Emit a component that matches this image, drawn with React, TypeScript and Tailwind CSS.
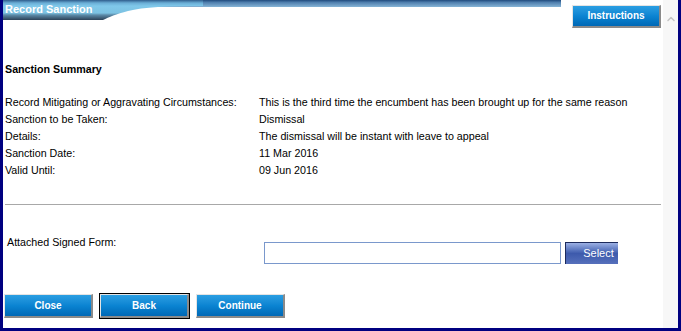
import { ChevronUp } from "lucide-react";

const rows = [
  { label: "Record Mitigating or Aggravating Circumstances:", value: "This is the third time the encumbent has been brought up for the same reason" },
  { label: "Sanction to be Taken:", value: "Dismissal" },
  { label: "Details:", value: "The dismissal will be instant with leave to appeal" },
  { label: "Sanction Date:", value: "11 Mar 2016" },
  { label: "Valid Until:", value: "09 Jun 2016" },
];

// bevelled blue button, like the old web forms
function BlueButton({ text, focused }: { text: string; focused?: boolean }) {
  const btn = (
    <button
      className="w-[89px] h-[24px] border-t border-l border-r-2 border-b-2 border-t-[#e4e4e4] border-l-[#e4e4e4] border-r-[#8a8a8a] border-b-[#8a8a8a] bg-gradient-to-b from-[#2a9ee2] via-[#0b84d2] to-[#0068b6] text-white text-[10px] font-bold leading-none"
    >
      {text}
    </button>
  );
  if (focused) {
    return <div className="border border-black">{btn}</div>;
  }
  return btn;
}

export default function App() {
  return (
    <div className="w-[681px] h-[331px] flex bg-white border-x-[3px] border-b-[3px] border-[#000080] overflow-hidden font-['Liberation_Sans',Arial,sans-serif] text-[10.7px] text-black">
      {/* Main panel */}
      <div className="flex-1 flex flex-col">
        {/* Header */}
        <div className="relative h-[28px] flex items-start justify-between">
          <svg className="absolute left-0 top-0" width="558" height="20" viewBox="0 0 558 20">
            <defs>
              <linearGradient id="stripe" x1="0" y1="0" x2="0" y2="1">
                <stop offset="0" stopColor="#1f4a7c" />
                <stop offset="0.35" stopColor="#4f7fae" />
                <stop offset="1" stopColor="#86b4d6" />
              </linearGradient>
              <linearGradient id="tab" x1="0" y1="0" x2="0" y2="20" gradientUnits="userSpaceOnUse">
                <stop offset="0" stopColor="#2f5d8c" />
                <stop offset="0.15" stopColor="#6aaed6" />
                <stop offset="0.3" stopColor="#80c8ea" />
                <stop offset="0.65" stopColor="#7cc2e2" />
                <stop offset="0.75" stopColor="#5c8aa8" />
                <stop offset="1" stopColor="#2c4258" />
              </linearGradient>
            </defs>
            <rect x="0" y="0" width="558" height="7" fill="url(#stripe)" />
            <path d="M0 0 H200 V6 C165 6 140 7 125 11 C113 14 106 17 100 20 H0 Z" fill="url(#tab)" />
          </svg>
          <span className="relative pl-[2px] pt-[3px] text-white font-bold text-[11px] leading-[13px]">
            Record Sanction
          </span>
          <button className="mt-[5px] mr-[2px] w-[89px] h-[23px] border-t border-l border-r-2 border-b-2 border-t-[#e4e4e4] border-l-[#e4e4e4] border-r-[#8a8a8a] border-b-[#8a8a8a] bg-gradient-to-b from-[#2a9ee2] via-[#0b84d2] to-[#0068b6] text-white text-[10px] font-bold leading-none">
            Instructions
          </button>
        </div>

        {/* Summary */}
        <div className="pl-[2px] mt-[33px] font-bold leading-[17px]">Sanction Summary</div>
        <div className="pl-[2px] mt-[16px] flex flex-col">
          {rows.map((r) => (
            <div key={r.label} className="flex leading-[17px]">
              <div className="w-[254px] shrink-0">{r.label}</div>
              <div>{r.value}</div>
            </div>
          ))}
        </div>

        <div className="mt-[25px] mx-[2px] h-px bg-[#a8a8a8]" />

        {/* Attachment */}
        <div className="mt-[29px] flex items-start">
          <div className="pl-[4px] w-[261px] shrink-0 leading-[17px]">Attached Signed Form:</div>
          <input
            type="text"
            className="mt-[8px] w-[297px] h-[22px] border border-[#7a98cc] outline-none"
          />
          <div className="mt-[8px] ml-[4px] w-[53px] h-[22px] overflow-hidden">
            <button className="w-[66px] h-[22px] border-t border-l border-[#1c2a5c] bg-gradient-to-b from-[#9cb0e4] via-[#3d5aac] to-[#5670bc] text-white text-[11px] leading-none">
              Select
            </button>
          </div>
        </div>

        {/* Actions */}
        <div className="mt-[29px] pl-[1px] flex items-center gap-[6px]">
          <BlueButton text="Close" />
          <BlueButton text="Back" focused />
          <BlueButton text="Continue" />
        </div>
      </div>

      {/* Scrollbar */}
      <div className="w-[15px] bg-[#f7f7f7] flex flex-col items-center pt-[13px]">
        <ChevronUp className="w-[12px] h-[12px] text-[#c4c4c4]" strokeWidth={3} />
      </div>
    </div>
  );
}
